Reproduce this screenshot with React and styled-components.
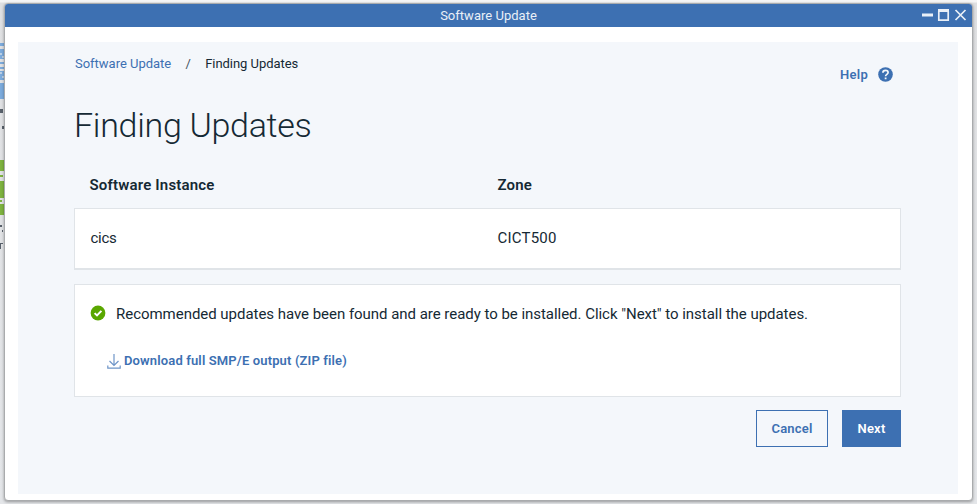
import React from 'react';
import styled, { createGlobalStyle } from 'styled-components';

const GlobalStyle = createGlobalStyle`
  * { box-sizing: border-box; }
  body {
    margin: 0;
    overflow: hidden;
    background: #e4e5e7;
    font-family: Roboto, "Liberation Sans", sans-serif;
    color: #152934;
  }
`;

const Desktop = styled.div`
  display: flex;
  width: 977px;
  height: 504px;
  padding-top: 3px;
  background: linear-gradient(#f5f5f5 0, #f5f5f5 2px, #dfe0e2 3px, #e4e6e9 100%);
`;

const Backdrop = styled.svg`
  display: block;
  flex: none;
  width: 4px;
  height: 501px;
`;

const Window = styled.main`
  display: flex;
  flex-direction: column;
  width: 969px;
  height: 498px;
  border: 1px solid #a9abad;
  border-radius: 4px;
  background: #fff;
  box-shadow: 0 1px 3px rgba(0, 0, 0, 0.35);
  overflow: hidden;
`;

const TitleBar = styled.header`
  display: grid;
  grid-template-columns: 1fr auto 1fr;
  align-items: center;
  flex: none;
  height: 23px;
  background: #3d70b2;
  color: #e9eff7;
`;

const WindowTitle = styled.span`
  grid-column: 2;
  padding-top: 1px;
  font-size: 13px;
  line-height: 22px;
  letter-spacing: 0.02px;
`;

const WindowControls = styled.svg`
  justify-self: end;
  width: 46px;
  height: 14px;
  margin: -1px 5px 0 0;
`;

const Panel = styled.section`
  flex: none;
  width: 940px;
  height: 452px;
  margin: 15px 0 0 13px;
  padding: 13px 57px 0 56px;
  background: #f4f7fb;
`;

const TopRow = styled.div`
  display: flex;
  justify-content: space-between;
  height: 40px;
  padding-left: 1px;
`;

const Breadcrumb = styled.nav`
  display: flex;
  padding-top: 1px;
  font-size: 13px;
  line-height: 16px;
`;

const Crumb = styled.span`
  color: ${p => (p.$link ? '#3d70b2' : '#152934')};
  letter-spacing: ${p => (p.$link ? '-0.02px' : '-0.04px')};
`;

const Divider = styled.span`
  width: 34px;
  text-align: center;
  color: #43535d;
`;

const Help = styled.a`
  display: flex;
  align-items: center;
  gap: 10px;
  height: 16px;
  margin: 11px 8px 0 0;
  color: #3d70b2;
  font-size: 13px;
  font-weight: 600;
  letter-spacing: 0.27px;
`;

const Heading = styled.h1`
  height: 50px;
  margin: 5px 0 1px;
  font-size: 34px;
  line-height: 50px;
  font-weight: 300;
  letter-spacing: -0.3px;
`;

const TableHead = styled.div`
  display: grid;
  grid-template-columns: 408px 1fr;
  height: 57px;
  padding: 24px 0 0 15.5px;
  font-size: 15px;
  line-height: 20px;
  font-weight: 600;
  letter-spacing: 0.18px;
`;

const Card = styled.div`
  height: ${p => p.$height};
  border: solid #e0e4e8;
  border-width: ${p => (p.$raised ? '1px 1px 2px' : '1px')};
  background: #fff;
`;

const TableRow = styled(Card)`
  display: grid;
  grid-template-columns: 407px 1fr;
  padding: 19px 0 0 15.5px;
  font-size: 15px;
  line-height: 20px;
`;

const Cell = styled.span`
  letter-spacing: ${p => p.$tracking};
`;

const MessageCard = styled(Card)`
  margin-top: 14px;
  padding: 19px 0 0 15px;
`;

const Message = styled.div`
  display: flex;
  align-items: center;
  height: 20px;
  gap: 10px;
  font-size: 15px;
  line-height: 20px;
  letter-spacing: -0.033px;
`;

const StatusIcon = styled.svg`
  width: 16px;
  height: 16px;
  margin-top: -2px;
`;

const Download = styled.a`
  display: flex;
  gap: 3px;
  margin: 28px 0 0 17px;
  color: #3d70b2;
  font-size: 13px;
  line-height: 18px;
  font-weight: 600;
  letter-spacing: 0.14px;
`;

const DownloadIcon = styled.svg`
  width: 14px;
  height: 15px;
  margin-top: 2px;
`;

const Actions = styled.footer`
  display: flex;
  justify-content: flex-end;
  gap: 14px;
  margin-top: 13px;
`;

const Button = styled.button`
  width: ${p => p.$width};
  height: 37px;
  padding: 0;
  border: 1px solid #3d70b2;
  background: ${p => (p.$primary ? '#3d70b2' : 'transparent')};
  color: ${p => (p.$primary ? '#fff' : '#3d70b2')};
  font: 600 13px Roboto, "Liberation Sans", sans-serif;
  letter-spacing: 0.2px;
`;

function BackdropStrip() {
  return (
    <Backdrop viewBox="0 0 4 501" shapeRendering="crispEdges">
      <path fill="#7cabdc" d="M0 40h4v3H0zM0 46h4v10H0zM0 59h4v2H0zM0 64h4v2H0zM0 68h4v9H0zM0 80h4v16H0z" />
      <path fill="#b9cfe5" d="M0 50h2v2H0zM2 53h2v2H2zM0 69h2v2H0zM2 73h2v2H2z" />
      <path fill="#7eb33f" d="M0 157h4v11H0zM0 172h3v2H0zM0 178h4v17H0zM0 197h2v2H0zM0 201h4v11H0z" />
      <path fill="#59616b" d="M0 106h3v4H0zM2 123h2v3H2zM0 222h2v2H0zM2 227h1v2H2zM0 240h1v6H0zM1 240h2v1H1z" />
    </Backdrop>
  );
}

export default function App() {
  return (
    <>
      <GlobalStyle />
      <Desktop>
        <BackdropStrip />
        <Window>
          <TitleBar>
            <WindowTitle>Software Update</WindowTitle>
            <WindowControls viewBox="0 0 46 14" fill="none" stroke="#e9eff7">
              <path d="M1 7h11" strokeWidth="3" />
              <path d="M17 2.5h11" strokeWidth="3" />
              <path d="M17.8 3v9.2h9.4V3" strokeWidth="1.7" />
              <path d="M34.5 2l10 10M44.5 2l-10 10" strokeWidth="1.7" />
            </WindowControls>
          </TitleBar>
          <Panel>
            <TopRow>
              <Breadcrumb>
                <Crumb $link>Software Update</Crumb>
                <Divider>/</Divider>
                <Crumb>Finding Updates</Crumb>
              </Breadcrumb>
              <Help>
                Help
                <svg width="15" height="15" viewBox="0 0 15 15">
                  <circle cx="7.5" cy="7.5" r="7.3" fill="#3d70b2" />
                  <path d="M4.9 5.8C4.9 4.3 6 3.4 7.5 3.4S10.1 4.3 10.1 5.6c0 1.8-2.5 1.7-2.5 3.6" fill="none" stroke="#f4f7fb" strokeWidth="1.7" />
                  <path d="M6.7 10.4h1.8v1.8H6.7z" fill="#f4f7fb" />
                </svg>
              </Help>
            </TopRow>
            <Heading>Finding Updates</Heading>
            <TableHead>
              <span>Software Instance</span>
              <span>Zone</span>
            </TableHead>
            <TableRow $height="62px" $raised>
              <Cell $tracking="-0.25px">cics</Cell>
              <Cell $tracking="0.2px">CICT500</Cell>
            </TableRow>
            <MessageCard $height="113px">
              <Message>
                <StatusIcon viewBox="0 0 16 16">
                  <circle cx="8" cy="8" r="7.4" fill="#5aa700" />
                  <path d="M4.6 8.1l2.4 2.3 4.4-4.5" fill="none" stroke="#fff" strokeWidth="2" />
                </StatusIcon>
                Recommended updates have been found and are ready to be installed. Click "Next" to install the updates.
              </Message>
              <Download>
                <DownloadIcon viewBox="0 0 14 15" fill="none" stroke="#6e95c8" strokeWidth="1.2">
                  <path d="M7 0v11.5M2.5 7L7 11.5 11.5 7M.8 11.5v2.7h12.4v-2.7" />
                </DownloadIcon>
                Download full SMP/E output (ZIP file)
              </Download>
            </MessageCard>
            <Actions>
              <Button $width="72px">Cancel</Button>
              <Button $width="59px" $primary>Next</Button>
            </Actions>
          </Panel>
        </Window>
      </Desktop>
    </>
  );
}
